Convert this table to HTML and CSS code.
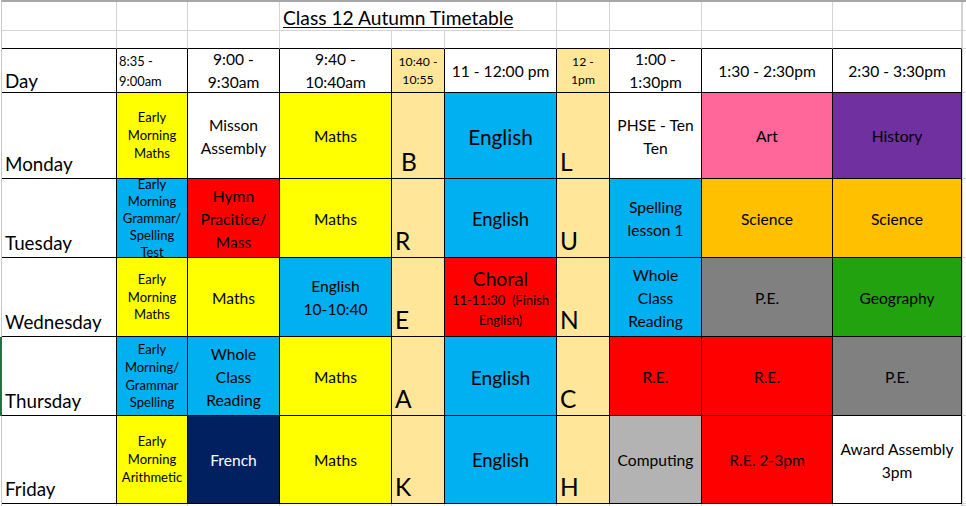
FILE: index.html
```html
<!DOCTYPE html>
<html>
<head>
<meta charset="utf-8">
<title>Class 12 Autumn Timetable</title>
<link rel="stylesheet" href="styles.css">
</head>
<body>
<div class="sheet">
  <!-- row 1 -->
  <div class="g"></div>
  <div class="g"></div>
  <div class="g"></div>
  <div class="g title"><span>Class 12 Autumn Timetable</span></div>
  <div class="g"></div>
  <div class="g"></div>
  <div class="g"></div>
  <div class="g"></div>
  <div class="x"></div>
  <!-- row 2 -->
  <div class="g gb"></div>
  <div class="g gb"></div>
  <div class="g gb"></div>
  <div class="g gb"></div>
  <div class="g gb"></div>
  <div class="g gb"></div>
  <div class="g gb"></div>
  <div class="g gb"></div>
  <div class="g gb"></div>
  <div class="g gb"></div>
  <div class="x"></div>
  <!-- header -->
  <div class="c day day-head">Day</div>
  <div class="c hs-left">8:35 -<br>9:00am</div>
  <div class="c h">9:00 -<br>9:30am</div>
  <div class="c h">9:40 -<br>10:40am</div>
  <div class="c hs brk">10:40 -<br>10:55</div>
  <div class="c h">11 - 12:00 pm</div>
  <div class="c hs brk">12 -<br>1pm</div>
  <div class="c h">1:00 -<br>1:30pm</div>
  <div class="c h">1:30 - 2:30pm</div>
  <div class="c h">2:30 - 3:30pm</div>
  <div class="x"></div>
  <!-- Monday -->
  <div class="c day">Monday</div>
  <div class="c sm yellow">Early<br>Morning<br>Maths</div>
  <div class="c">Misson<br>Assembly</div>
  <div class="c yellow">Maths</div>
  <div class="c letter letter-b brk">B</div>
  <div class="c blue eng-xl">English</div>
  <div class="c letter brk">L</div>
  <div class="c">PHSE - Ten<br>Ten</div>
  <div class="c pink">Art</div>
  <div class="c purple">History</div>
  <div class="x"></div>
  <!-- Tuesday -->
  <div class="c day">Tuesday</div>
  <div class="c sm sm-over blue">Early<br>Morning<br>Grammar/<br>Spelling<br>Test</div>
  <div class="c red">Hymn<br>Pracitice/<br>Mass</div>
  <div class="c yellow">Maths</div>
  <div class="c letter brk">R</div>
  <div class="c blue eng-l">English</div>
  <div class="c letter brk">U</div>
  <div class="c blue">Spelling<br>lesson 1</div>
  <div class="c orange">Science</div>
  <div class="c orange">Science</div>
  <div class="x"></div>
  <!-- Wednesday -->
  <div class="c day">Wednesday</div>
  <div class="c sm yellow">Early<br>Morning<br>Maths</div>
  <div class="c yellow">Maths</div>
  <div class="c blue">English<br>10-10:40</div>
  <div class="c letter brk">E</div>
  <div class="c red choral"><span class="choral-big">Choral</span><span class="choral-sm">11-11:30&nbsp; (Finish<br>English)</span></div>
  <div class="c letter brk">N</div>
  <div class="c blue">Whole<br>Class<br>Reading</div>
  <div class="c grey">P.E.</div>
  <div class="c green">Geography</div>
  <div class="x"></div>
  <!-- Thursday -->
  <div class="c day day-sel">Thursday</div>
  <div class="c sm blue">Early<br>Morning/<br>Grammar<br>Spelling</div>
  <div class="c blue">Whole<br>Class<br>Reading</div>
  <div class="c yellow">Maths</div>
  <div class="c letter brk">A</div>
  <div class="c blue eng-m">English</div>
  <div class="c letter brk">C</div>
  <div class="c red">R.E.</div>
  <div class="c red">R.E.</div>
  <div class="c grey">P.E.</div>
  <div class="x"></div>
  <!-- Friday -->
  <div class="c day">Friday</div>
  <div class="c sm yellow">Early<br>Morning<br>Arithmetic</div>
  <div class="c navy">French</div>
  <div class="c yellow">Maths</div>
  <div class="c letter brk">K</div>
  <div class="c blue eng-l">English</div>
  <div class="c letter brk">H</div>
  <div class="c silver">Computing</div>
  <div class="c red">R.E. 2-3pm</div>
  <div class="c">Award Assembly<br>3pm</div>
  <div class="x"></div>
  <!-- below -->
  <div class="b"></div>
  <div class="b"></div>
  <div class="b"></div>
  <div class="b"></div>
  <div class="b"></div>
  <div class="b"></div>
  <div class="b"></div>
  <div class="b"></div>
  <div class="b"></div>
  <div class="b"></div>
  <div class="x"></div>
</div>
</body>
</html>
```

FILE: styles.css
```css
* {
  box-sizing: border-box;
}

html,
body {
  margin: 0;
  padding: 0;
  background: #ffffff;
}

body {
  width: 966px;
  height: 506px;
  overflow: hidden;
  font-family: Lato, "Liberation Sans", sans-serif;
  color: #000000;
}

.sheet {
  margin-left: 1px;
  border-left: 1px solid #c8c8c8;
  border-top: 2px solid #a6a6a6;
  display: grid;
  grid-template-columns: 115px 71px 92px 112px 53px 112px 53px 92px 131px 129px 4px;
  grid-template-rows: 29px 18px 44px 86px 79px 79px 79px 88px 2px;
}

/* gridline-only cells above the table */
.g {
  border-right: 1px solid #d4d4d4;
  border-bottom: 1px solid #d4d4d4;
}

.gb {
  border-bottom-color: #000000;
}

.x {
  border-left: 1px solid #d4d4d4;
  border-bottom: 1px solid #d4d4d4;
}

.b {
  border-right: 1px solid #d4d4d4;
}

.title {
  grid-column: span 3;
  display: flex;
  align-items: center;
  padding: 3px 0 0 3px;
  font-size: 19.2px;
  white-space: nowrap;
}

.title span {
  text-decoration: underline;
  text-decoration-thickness: 1px;
  text-underline-offset: 2px;
}

/* table cells */
.c {
  position: relative;
  border-right: 1px solid #000000;
  border-bottom: 1px solid #000000;
  display: flex;
  align-items: center;
  justify-content: center;
  text-align: center;
  overflow: hidden;
  font-size: 15.6px;
  line-height: 23px;
  white-space: nowrap;
  padding-top: 2px;
}

.day {
  justify-content: flex-start;
  align-items: flex-end;
  text-align: left;
  font-size: 18.8px;
  line-height: normal;
  padding: 0 0 3px 3px;
}

.day-head {
  padding-bottom: 0;
}

.day-sel::before {
  content: "";
  position: absolute;
  left: -2px;
  top: 0;
  bottom: -1px;
  width: 2px;
  background: #217346;
}

.day-sel {
  overflow: visible;
}

.h {
  font-size: 15.6px;
  line-height: 22.6px;
  padding-top: 1px;
}

.hs {
  font-size: 12.2px;
  line-height: 17.7px;
  padding-top: 1px;
}

.hs-left {
  justify-content: flex-start;
  text-align: left;
  padding-left: 2px;
  padding-top: 1px;
  font-size: 12.9px;
  line-height: 20px;
}

.sm {
  font-size: 13px;
  line-height: 17.7px;
  padding-top: 1px;
}

.sm-over {
  padding-top: 1px;
  line-height: 17px;
}

.letter {
  justify-content: flex-start;
  align-items: flex-end;
  font-size: 24.5px;
  line-height: normal;
  padding: 0 0 2px 3px;
}

.letter-b {
  padding-left: 9px;
}

.eng-xl {
  font-size: 20.8px;
}

.eng-l {
  font-size: 18.4px;
}

.eng-m {
  font-size: 19.2px;
}

.choral {
  flex-direction: column;
  padding-top: 4px;
}

.choral-big {
  font-size: 19.2px;
  line-height: 22px;
}

.choral-sm {
  font-size: 13px;
  line-height: 20px;
}

/* fills */
.brk { background: #ffe699; }
.yellow { background: #ffff00; }
.blue { background: #00b0f0; }
.red { background: #ff0000; }
.pink { background: #ff6699; }
.purple { background: #7030a0; }
.orange { background: #ffc000; }
.grey { background: #808080; }
.green { background: #22a20e; }
.silver { background: #b3b3b3; }
.navy {
  background: #002060;
  color: #ffffff;
}
```
